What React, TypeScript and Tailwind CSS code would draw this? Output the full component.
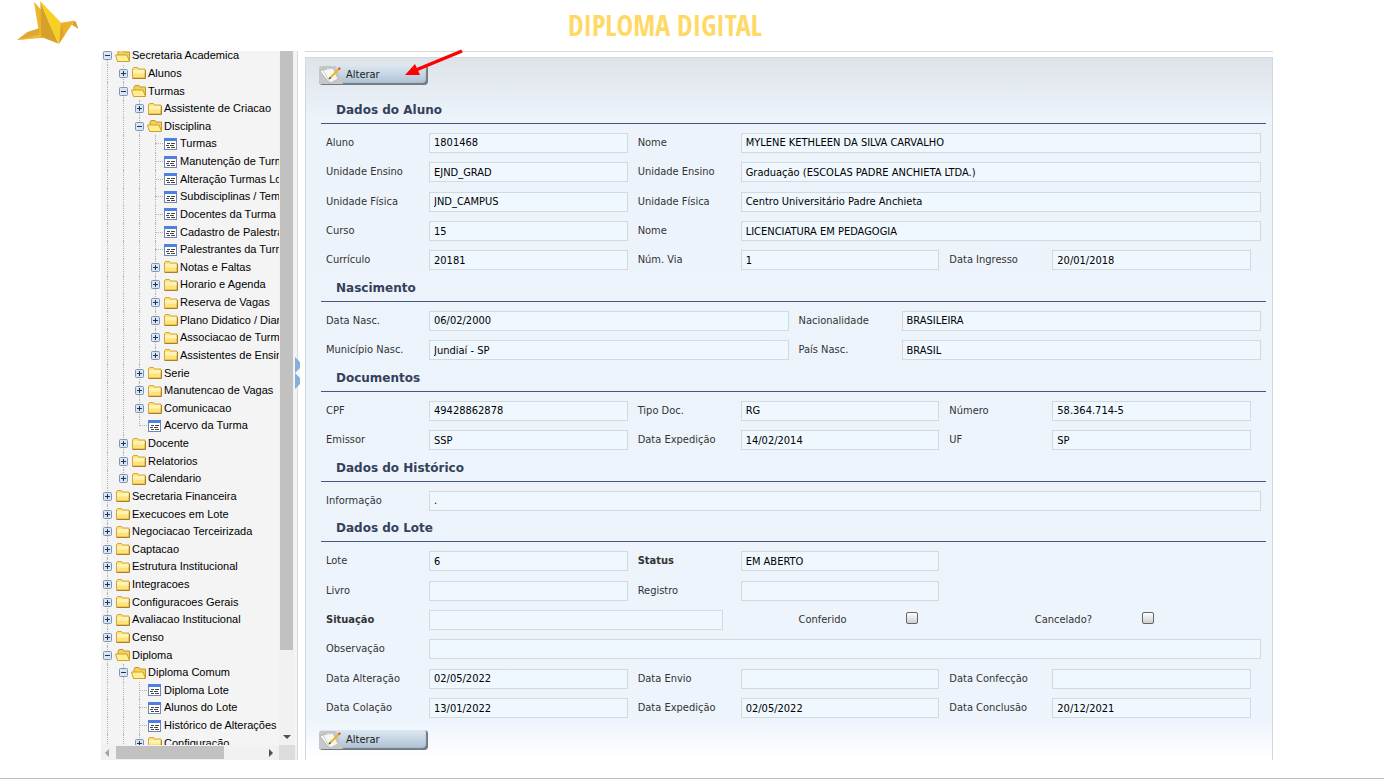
import { useId, type ReactNode } from "react";

type Kind = "open" | "closed" | "page";

type TreeNode = { label: string; level: number; kind: Kind };

const tree: TreeNode[] = [
  { label: "Secretaria Academica", level: 0, kind: "open" },
  { label: "Alunos", level: 1, kind: "closed" },
  { label: "Turmas", level: 1, kind: "open" },
  { label: "Assistente de Criacao", level: 2, kind: "closed" },
  { label: "Disciplina", level: 2, kind: "open" },
  { label: "Turmas", level: 3, kind: "page" },
  { label: "Manutenção de Turmas", level: 3, kind: "page" },
  { label: "Alteração Turmas Lote", level: 3, kind: "page" },
  { label: "Subdisciplinas / Temas", level: 3, kind: "page" },
  { label: "Docentes da Turma", level: 3, kind: "page" },
  { label: "Cadastro de Palestrantes", level: 3, kind: "page" },
  { label: "Palestrantes da Turma", level: 3, kind: "page" },
  { label: "Notas e Faltas", level: 3, kind: "closed" },
  { label: "Horario e Agenda", level: 3, kind: "closed" },
  { label: "Reserva de Vagas", level: 3, kind: "closed" },
  { label: "Plano Didatico / Diario", level: 3, kind: "closed" },
  { label: "Associacao de Turmas", level: 3, kind: "closed" },
  { label: "Assistentes de Ensino", level: 3, kind: "closed" },
  { label: "Serie", level: 2, kind: "closed" },
  { label: "Manutencao de Vagas", level: 2, kind: "closed" },
  { label: "Comunicacao", level: 2, kind: "closed" },
  { label: "Acervo da Turma", level: 2, kind: "page" },
  { label: "Docente", level: 1, kind: "closed" },
  { label: "Relatorios", level: 1, kind: "closed" },
  { label: "Calendario", level: 1, kind: "closed" },
  { label: "Secretaria Financeira", level: 0, kind: "closed" },
  { label: "Execucoes em Lote", level: 0, kind: "closed" },
  { label: "Negociacao Terceirizada", level: 0, kind: "closed" },
  { label: "Captacao", level: 0, kind: "closed" },
  { label: "Estrutura Institucional", level: 0, kind: "closed" },
  { label: "Integracoes", level: 0, kind: "closed" },
  { label: "Configuracoes Gerais", level: 0, kind: "closed" },
  { label: "Avaliacao Institucional", level: 0, kind: "closed" },
  { label: "Censo", level: 0, kind: "closed" },
  { label: "Diploma", level: 0, kind: "open" },
  { label: "Diploma Comum", level: 1, kind: "open" },
  { label: "Diploma Lote", level: 2, kind: "page" },
  { label: "Alunos do Lote", level: 2, kind: "page" },
  { label: "Histórico de Alterações", level: 2, kind: "page" },
  { label: "Configuração", level: 2, kind: "closed" },
];

// A guide goes on below a row while a later sibling exists at that level.
function continues(index: number, level: number) {
  for (let i = index + 1; i < tree.length; i++) {
    if (tree[i].level < level) return false;
    if (tree[i].level === level) return true;
  }
  return true;
}

function Logo() {
  return (
    <svg viewBox="0 0 228 150" className="h-[50px] w-[76px] shrink-0" aria-hidden="true">
      <polygon points="21,120 52,96 97,82 98,112" fill="#dfa632" />
      <polygon points="21,120 97,101 100,113" fill="#efba38" />
      <polygon points="72,5 102,40 96,112 88,104" fill="#eeb52c" />
      <polygon points="91,3 118,70 146,131 94,111" fill="#d6a02d" />
      <polygon points="91,3 153,68 147,131 118,72" fill="#f8cf25" />
      <polygon points="153,68 190,62 186,73 147,131" fill="#e9b22b" />
      <polygon points="153,68 163,106 147,131" fill="#dca62c" />
      <polygon points="190,62 198,65 205,87 186,74" fill="#d9a02a" />
    </svg>
  );
}

function FolderIcon({ open }: { open: boolean }) {
  return (
    <svg viewBox="0 0 16 14" className="h-3.5 w-4 shrink-0" aria-hidden="true">
      {open ? (
        <>
          <path d="M3 12V3l1-1.500h4l1 1.500h5.500v9z" fill="#f3cf5e" stroke="#c99a22" />
          <path d="M.5 6h11.500l2.500 6.500H2.500z" fill="#ffee92" stroke="#d0a22c" />
        </>
      ) : (
        <>
          <path d="M1.500 12V3l1-1.500h4l1 1.500h6.500v9z" fill="#ffe37a" stroke="#d3a73a" />
          <path d="M2 4h11.500v3.500H2z" fill="#fff3b4" />
          <path d="M1.500 12.500h13V4" fill="none" stroke="#ac8124" />
        </>
      )}
    </svg>
  );
}

function PageIcon() {
  return (
    <svg viewBox="0 0 16 14" className="h-3.5 w-4 shrink-0" aria-hidden="true">
      <rect x="1.500" y="1.500" width="12" height="11" fill="#fff" stroke="#6f86b4" />
      <rect x="1" y="1" width="13" height="3" fill="#4f7fe0" />
      <path d="M4 6.500h3M8 6.500h4M3 8.500h3M7 8.500h4M4 10.500h3M8 10.500h4" stroke="#444" />
    </svg>
  );
}

function Toggle({ open }: { open: boolean }) {
  return (
    <svg viewBox="0 0 9 9" className="relative h-[9px] w-[9px]" aria-hidden="true">
      <rect x=".5" y=".5" width="8" height="8" rx="1" fill="#dbe4f1" stroke="#7c95b8" />
      <path d={open ? "M2 4.500h5" : "M2 4.500h5M4.500 2v5"} stroke="#1f3357" />
    </svg>
  );
}

function TreeRow({ node, index }: { node: TreeNode; index: number }) {
  const below = continues(index, node.level);
  return (
    <li className="flex min-h-[17px] flex-1 items-center whitespace-nowrap">
      {Array.from({ length: node.level }, (_, i) => (
        <span key={i} className="flex w-4 shrink-0 self-stretch pl-1.5">
          {continues(index, i) && <span className="border-l border-dotted border-[#b4b4b4]" />}
        </span>
      ))}
      <span className="relative flex w-3.5 shrink-0 items-center self-stretch pl-0.5">
        <span
          className={`absolute left-1.5 top-0 border-l border-dotted border-[#b4b4b4] ${below ? "h-full" : "h-1/2"}`}
        />
        {node.kind === "page" ? (
          <span className="ml-1 w-2 border-t border-dotted border-[#b4b4b4]" />
        ) : (
          <Toggle open={node.kind === "open"} />
        )}
      </span>
      {node.kind === "page" ? <PageIcon /> : <FolderIcon open={node.kind === "open"} />}
      <a href="#" className="pl-px text-[11px] leading-[17px] text-black">
        {node.label}
      </a>
    </li>
  );
}

function Sidebar() {
  return (
    <aside className="relative flex w-[197px] shrink-0 flex-col border-r border-[#d9d9d9] bg-[#f4f4f4] font-['Liberation_Sans',sans-serif]">
      <div className="flex min-h-0 flex-1">
        <nav className="flex w-[178px] flex-col overflow-hidden">
          <ul className="-mb-[7px] -mt-1 flex flex-1 flex-col">
            {tree.map((node, i) => (
              <TreeRow key={i} node={node} index={i} />
            ))}
          </ul>
        </nav>
        <div className="flex w-[15px] flex-col items-center bg-[#f1f1f1] pb-1.5">
          <div className="w-[13px] grow-[7] bg-[#c1c1c1]" />
          <div className="grow" />
          <svg viewBox="0 0 8 4" className="h-1 w-2" aria-hidden="true">
            <path d="M0 0h8L4 4z" fill="#505050" />
          </svg>
        </div>
      </div>
      <div className="flex h-[15px] items-center bg-[#f1f1f1] pl-1">
        <svg viewBox="0 0 4 8" className="h-2 w-1" aria-hidden="true">
          <path d="M4 0v8L0 4z" fill="#a3a3a3" />
        </svg>
        <div className="ml-[7px] h-[13px] w-[108px] bg-[#c1c1c1]" />
        <svg viewBox="0 0 4 8" className="ml-auto h-2 w-1" aria-hidden="true">
          <path d="M0 0v8l4-4z" fill="#505050" />
        </svg>
        <div className="ml-1.5 mr-0.5 h-full w-4 bg-[#dcdcdc]" />
      </div>
      <button
        type="button"
        aria-label="Recolher menu"
        className="absolute -right-[3px] top-[306px] h-8 w-[5px]"
      >
        <svg viewBox="0 0 5 32" className="block h-8 w-[5px]">
          <path d="M0 0l5 5v22l-5 5z" fill="#86aed6" />
          <path d="M5 11v10l-5-5z" fill="#f3f6fa" />
        </svg>
      </button>
    </aside>
  );
}

function EditButton() {
  return (
    <button
      type="button"
      className="relative flex h-5 w-[109px] items-center overflow-hidden rounded-[4px] bg-linear-to-b from-[#dde7f0] via-[#c3d4e3] to-[#a9bdd0] text-[11px] leading-5 text-[#222] shadow-[inset_-2px_-2px_1px_#74797f]"
    >
      <svg viewBox="0 0 24 18" className="h-[18px] w-6 shrink-0" aria-hidden="true">
        <path d="M0 0h17l7 18H0z" fill="#c6c7c9" />
        <path d="M1 5l9-4 8 11-8 5z" fill="#fff" stroke="#a2a2a2" strokeWidth=".7" />
        <path d="M4 4l10-2 5 11-8 4z" fill="#f7f7f2" stroke="#b5b5b5" strokeWidth=".7" />
        <path d="M11 12l9-9" stroke="#efb62b" strokeWidth="2.200" />
        <path d="M19.500 3.500l1.700-1.700" stroke="#d8604c" strokeWidth="2.400" />
        <path d="M10 13l1.500-1.500" stroke="#444" strokeWidth="1.500" />
      </svg>
      <span className="pl-[3px]">Alterar</span>
    </button>
  );
}

function Section({ title, children }: { title: string; children: ReactNode }) {
  return (
    <>
      <h2 className="mb-1 h-[27px] shrink-0 border-b border-[#465780] pl-[15px] font-['DejaVu_Sans',sans-serif] text-xs font-bold leading-[26px] text-[#34415a]">
        {title}
      </h2>
      {children}
    </>
  );
}

function Row({ className, children }: { className: string; children: ReactNode }) {
  return <div className={`grid min-h-7 flex-1 items-center pl-[5px] pr-[5px] ${className}`}>{children}</div>;
}

type FieldProps = { label: string; value?: string; strong?: boolean; className?: string };

function Field({ label, value = "", strong, className = "" }: FieldProps) {
  const id = useId();
  return (
    <div className={`flex items-center ${className}`}>
      <label htmlFor={id} className={`w-[103px] shrink-0 leading-5 text-[#333] ${strong ? "font-bold" : ""}`}>
        {label}
      </label>
      <input
        id={id}
        readOnly
        value={value}
        className="h-5 w-0 flex-1 border border-[#d6d9dc] bg-[#f0f8ff] px-1 text-black outline-none"
      />
    </div>
  );
}

function Check({ label }: { label: string }) {
  const id = useId();
  return (
    <div className="flex items-center">
      <label htmlFor={id} className="w-[107px] leading-5 text-[#333]">
        {label}
      </label>
      <input
        id={id}
        type="checkbox"
        className="mb-1 h-3 w-3 appearance-none rounded-[2px] border border-[#666] bg-linear-to-b from-white to-[#cfcfcf]"
      />
    </div>
  );
}

const two = "grid-cols-2 gap-x-2.5";
const three = "grid-cols-3";

export default function App() {
  return (
    <div className="flex min-h-screen flex-col border-b border-[#bfbfbf] bg-white pb-[18px]">
      <header className="flex h-[51px] shrink-0 items-start pl-2.5">
        <Logo />
        <h1 className="flex-1 pr-[140px] text-center font-['Open_Sans_Condensed','Roboto_Condensed',sans-serif] text-[28px] font-bold leading-[50px] text-[#ffd966]">
          DIPLOMA DIGITAL
        </h1>
      </header>

      <div className="flex flex-1 pl-[101px] pr-[111px]">
        <Sidebar />
        <main className="ml-[7px] flex flex-1 flex-col border-t border-[#d9d9d9] pt-[5px] font-['DejaVu_Sans_Condensed','DejaVu_Sans',sans-serif] text-[11px]">
          <form className="flex flex-1 flex-col border-x border-t border-[#d3d8df] bg-[linear-gradient(to_bottom,#dee3e9_0,#edf3fb_60px,#edf4fc_calc(100%-40px),#fff_100%)] pb-2.5 pl-[15px] pr-1.5 pt-[7px]">
            <div className="relative -ml-0.5 mb-3 w-[109px]">
              <EditButton />
              <svg
                viewBox="0 0 60 30"
                className="pointer-events-none absolute -top-4 left-[85px] h-[30px] w-[60px]"
                aria-hidden="true"
              >
                <path d="M58 2L12 21" stroke="#fe0000" strokeWidth="3.500" />
                <path d="M1 26l10-11 5 11z" fill="#fe0000" />
              </svg>
            </div>

            <Section title="Dados do Aluno">
              <Row className={three}>
                <Field label="Aluno" value="1801468" className="pr-2.5" />
                <Field label="Nome" value="MYLENE KETHLEEN DA SILVA CARVALHO" className="col-span-2" />
              </Row>
              <Row className={three}>
                <Field label="Unidade Ensino" value="EJND_GRAD" className="pr-2.5" />
                <Field
                  label="Unidade Ensino"
                  value="Graduação (ESCOLAS PADRE ANCHIETA LTDA.)"
                  className="col-span-2"
                />
              </Row>
              <Row className={three}>
                <Field label="Unidade Física" value="JND_CAMPUS" className="pr-2.5" />
                <Field label="Unidade Física" value="Centro Universitário Padre Anchieta" className="col-span-2" />
              </Row>
              <Row className={three}>
                <Field label="Curso" value="15" className="pr-2.5" />
                <Field label="Nome" value="LICENCIATURA EM PEDAGOGIA" className="col-span-2" />
              </Row>
              <Row className={three}>
                <Field label="Currículo" value="20181" className="pr-2.5" />
                <Field label="Núm. Via" value="1" className="pr-2.5" />
                <Field label="Data Ingresso" value="20/01/2018" className="pr-2.5" />
              </Row>
            </Section>

            <Section title="Nascimento">
              <Row className={two}>
                <Field label="Data Nasc." value="06/02/2000" />
                <Field label="Nacionalidade" value="BRASILEIRA" />
              </Row>
              <Row className={two}>
                <Field label="Município Nasc." value="Jundiaí - SP" />
                <Field label="País Nasc." value="BRASIL" />
              </Row>
            </Section>

            <Section title="Documentos">
              <Row className={three}>
                <Field label="CPF" value="49428862878" className="pr-2.5" />
                <Field label="Tipo Doc." value="RG" className="pr-2.5" />
                <Field label="Número" value="58.364.714-5" className="pr-2.5" />
              </Row>
              <Row className={three}>
                <Field label="Emissor" value="SSP" className="pr-2.5" />
                <Field label="Data Expedição" value="14/02/2014" className="pr-2.5" />
                <Field label="UF" value="SP" className="pr-2.5" />
              </Row>
            </Section>

            <Section title="Dados do Histórico">
              <Row className="grid-cols-1">
                <Field label="Informação" value="." />
              </Row>
            </Section>

            <Section title="Dados do Lote">
              <Row className={three}>
                <Field label="Lote" value="6" className="pr-2.5" />
                <Field label="Status" value="EM ABERTO" strong className="pr-2.5" />
              </Row>
              <Row className={three}>
                <Field label="Livro" className="pr-2.5" />
                <Field label="Registro" className="pr-2.5" />
              </Row>
              <Row className={two}>
                <Field label="Situação" strong className="pr-[66px]" />
                <div className="grid grid-cols-2 gap-x-2.5">
                  <Check label="Conferido" />
                  <Check label="Cancelado?" />
                </div>
              </Row>
              <Row className="grid-cols-1">
                <Field label="Observação" />
              </Row>
              <Row className={three}>
                <Field label="Data Alteração" value="02/05/2022" className="pr-2.5" />
                <Field label="Data Envio" className="pr-2.5" />
                <Field label="Data Confecção" className="pr-2.5" />
              </Row>
              <Row className={three}>
                <Field label="Data Colação" value="13/01/2022" className="pr-2.5" />
                <Field label="Data Expedição" value="02/05/2022" className="pr-2.5" />
                <Field label="Data Conclusão" value="20/12/2021" className="pr-2.5" />
              </Row>
            </Section>

            <div className="-ml-0.5 mt-[7px]">
              <EditButton />
            </div>
          </form>
        </main>
      </div>
    </div>
  );
}
